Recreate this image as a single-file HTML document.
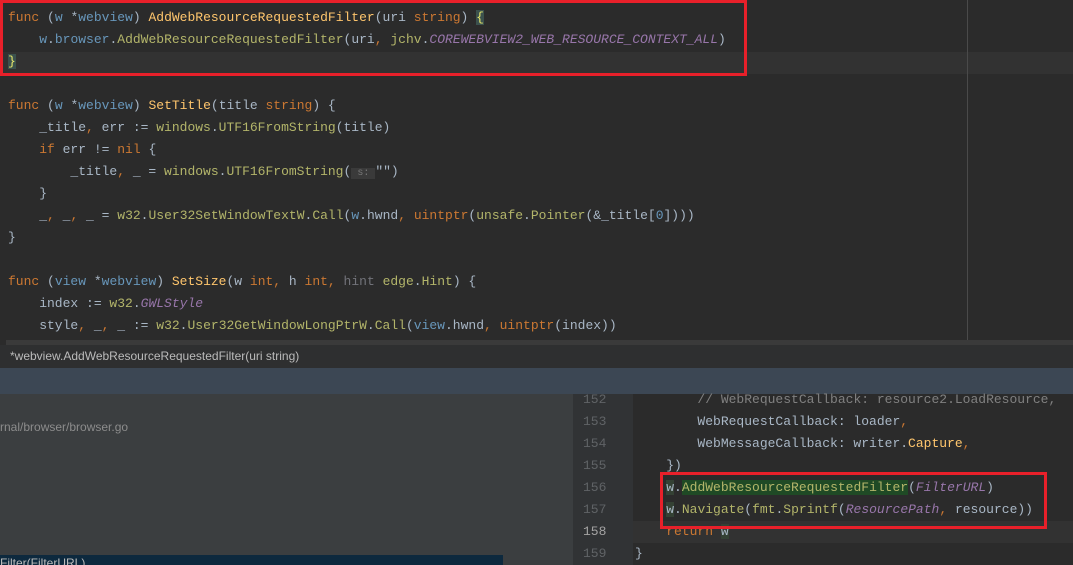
<!DOCTYPE html>
<html><head><meta charset="utf-8"><style>
body{margin:0;width:1073px;height:565px;overflow:hidden;background:#2b2b2b;position:relative;font-family:"Liberation Mono",monospace;}
.l{position:absolute;white-space:pre;font-size:13px;line-height:22px;color:#a9b7c6;}
.k{color:#cc7832}.f{color:#ffc66d}.b{color:#6897bb}.p{color:#b3b56a}.c{color:#9876aa;font-style:italic}.g{color:#808080}.u{color:#72737a}.m{color:#56a8f5}.y{color:#e8e86a}
.ln{position:absolute;left:573px;width:60px;font-size:13px;line-height:22px;color:#606366;font-family:"Liberation Mono",monospace;}
.ln span{display:block;padding-left:10px}
</style></head><body>
<div style="position:absolute;left:0;top:52px;width:1073px;height:22px;background:#323232"></div>
<div style="position:absolute;left:967px;top:0;width:1px;height:345px;background:#4a4a4a"></div>
<div class="l" style="left:8px;top:7px"><span class="k">func</span> (<span class="b">w</span> *<span class="b">webview</span>) <span class="f">AddWebResourceRequestedFilter</span>(uri <span class="k">string</span>) <span class="y" style="background:#3b514d">{</span></div>
<div class="l" style="left:8px;top:29px">    <span class="b">w</span>.<span class="b">browser</span>.<span class="p">AddWebResourceRequestedFilter</span>(uri<span class="k">,</span> <span class="p">jchv</span>.<span class="c">COREWEBVIEW2_WEB_RESOURCE_CONTEXT_ALL</span>)</div>
<div class="l" style="left:8px;top:51px"><span class="y" style="background:#3b514d">}</span></div>
<div class="l" style="left:8px;top:95px"><span class="k">func</span> (<span class="b">w</span> *<span class="b">webview</span>) <span class="f">SetTitle</span>(title <span class="k">string</span>) {</div>
<div class="l" style="left:8px;top:117px">    _title<span class="k">,</span> err := <span class="p">windows</span>.<span class="p">UTF16FromString</span>(title)</div>
<div class="l" style="left:8px;top:139px">    <span class="k">if</span> err != <span class="k">nil</span> {</div>
<div class="l" style="left:8px;top:161px">        _title<span class="k">,</span> _ = <span class="p">windows</span>.<span class="p">UTF16FromString</span>(<span style="background:#3a3a3a;color:#777;font-size:10px"> s: </span>"")</div>
<div class="l" style="left:8px;top:183px">    }</div>
<div class="l" style="left:8px;top:205px">    _<span class="k">,</span> _<span class="k">,</span> _ = <span class="p">w32</span>.<span class="p">User32SetWindowTextW</span>.<span class="p">Call</span>(<span class="b">w</span>.hwnd<span class="k">,</span> <span class="k">uintptr</span>(<span class="p">unsafe</span>.<span class="p">Pointer</span>(&amp;_title[<span class="b">0</span>])))</div>
<div class="l" style="left:8px;top:227px">}</div>
<div class="l" style="left:8px;top:271px"><span class="k">func</span> (<span class="b">view</span> *<span class="b">webview</span>) <span class="f">SetSize</span>(w <span class="k">int</span><span class="k">,</span> h <span class="k">int</span><span class="k">,</span> <span class="u">hint</span> <span class="p">edge</span>.<span class="p">Hint</span>) {</div>
<div class="l" style="left:8px;top:293px">    index := <span class="p">w32</span>.<span class="c">GWLStyle</span></div>
<div class="l" style="left:8px;top:315px">    style<span class="k">,</span> _<span class="k">,</span> _ := <span class="p">w32</span>.<span class="p">User32GetWindowLongPtrW</span>.<span class="p">Call</span>(<span class="b">view</span>.hwnd<span class="k">,</span> <span class="k">uintptr</span>(index))</div>
<div style="position:absolute;left:0;top:0;width:741px;height:70px;border:3px solid #e8202a"></div>
<div style="position:absolute;left:6px;top:340px;width:1067px;height:5px;background:#3a3a3a"></div>
<div style="position:absolute;left:0;top:345px;width:1073px;height:23px;background:#2e2f30;font-family:'Liberation Sans',sans-serif;font-size:12px;line-height:23px;color:#bbb;padding-left:10px;box-sizing:border-box">*webview.AddWebResourceRequestedFilter(uri string)</div>
<div style="position:absolute;left:0;top:368px;width:1073px;height:26px;background:#3c4754"></div>
<div style="position:absolute;left:0;top:394px;width:573px;height:171px;background:#3b3e40"></div>
<div style="position:absolute;left:0;top:417px;font-family:'Liberation Sans',sans-serif;font-size:12px;line-height:20px;color:#8c8c8c">rnal/browser/browser.go</div>
<div style="position:absolute;left:0;top:555px;width:503px;height:10px;background:#0d293e;overflow:hidden"><div style="font-family:'Liberation Sans',sans-serif;font-size:12px;color:#bbb;line-height:20px;margin-top:-2px">Filter(FilterURL)</div></div>
<div style="position:absolute;left:573px;top:394px;width:60px;height:171px;background:#313335"></div>
<div style="position:absolute;left:633px;top:521px;width:440px;height:22px;background:#323232"></div>
<div class="ln" style="top:389px"><span>152</span><span>153</span><span>154</span><span>155</span><span>156</span><span>157</span><span style="color:#a4a3a3">158</span><span>159</span></div>
<div class="l" style="left:635px;top:389px">        <span class="g">// WebRequestCallback: resource2.LoadResource,</span></div>
<div class="l" style="left:635px;top:411px">        WebRequestCallback: loader<span class="k">,</span></div>
<div class="l" style="left:635px;top:433px">        WebMessageCallback: writer.<span class="f">Capture</span><span class="k">,</span></div>
<div class="l" style="left:635px;top:455px">    })</div>
<div class="l" style="left:635px;top:477px">    <span style="background:#344134">w</span>.<span class="p" style="background:#1f4a25">AddWebResourceRequestedFilter</span>(<span class="c">FilterURL</span>)</div>
<div class="l" style="left:635px;top:499px">    <span style="background:#344134">w</span>.<span class="p">Navigate</span>(<span class="p">fmt</span>.<span class="p">Sprintf</span>(<span class="c">ResourcePath</span><span class="k">,</span> resource))</div>
<div class="l" style="left:635px;top:521px">    <span class="k">return</span> <span style="background:#344134">w</span></div>
<div class="l" style="left:635px;top:543px">}</div>
<div style="position:absolute;left:660px;top:472px;width:381px;height:51px;border:3px solid #e8202a"></div>
</body></html>
